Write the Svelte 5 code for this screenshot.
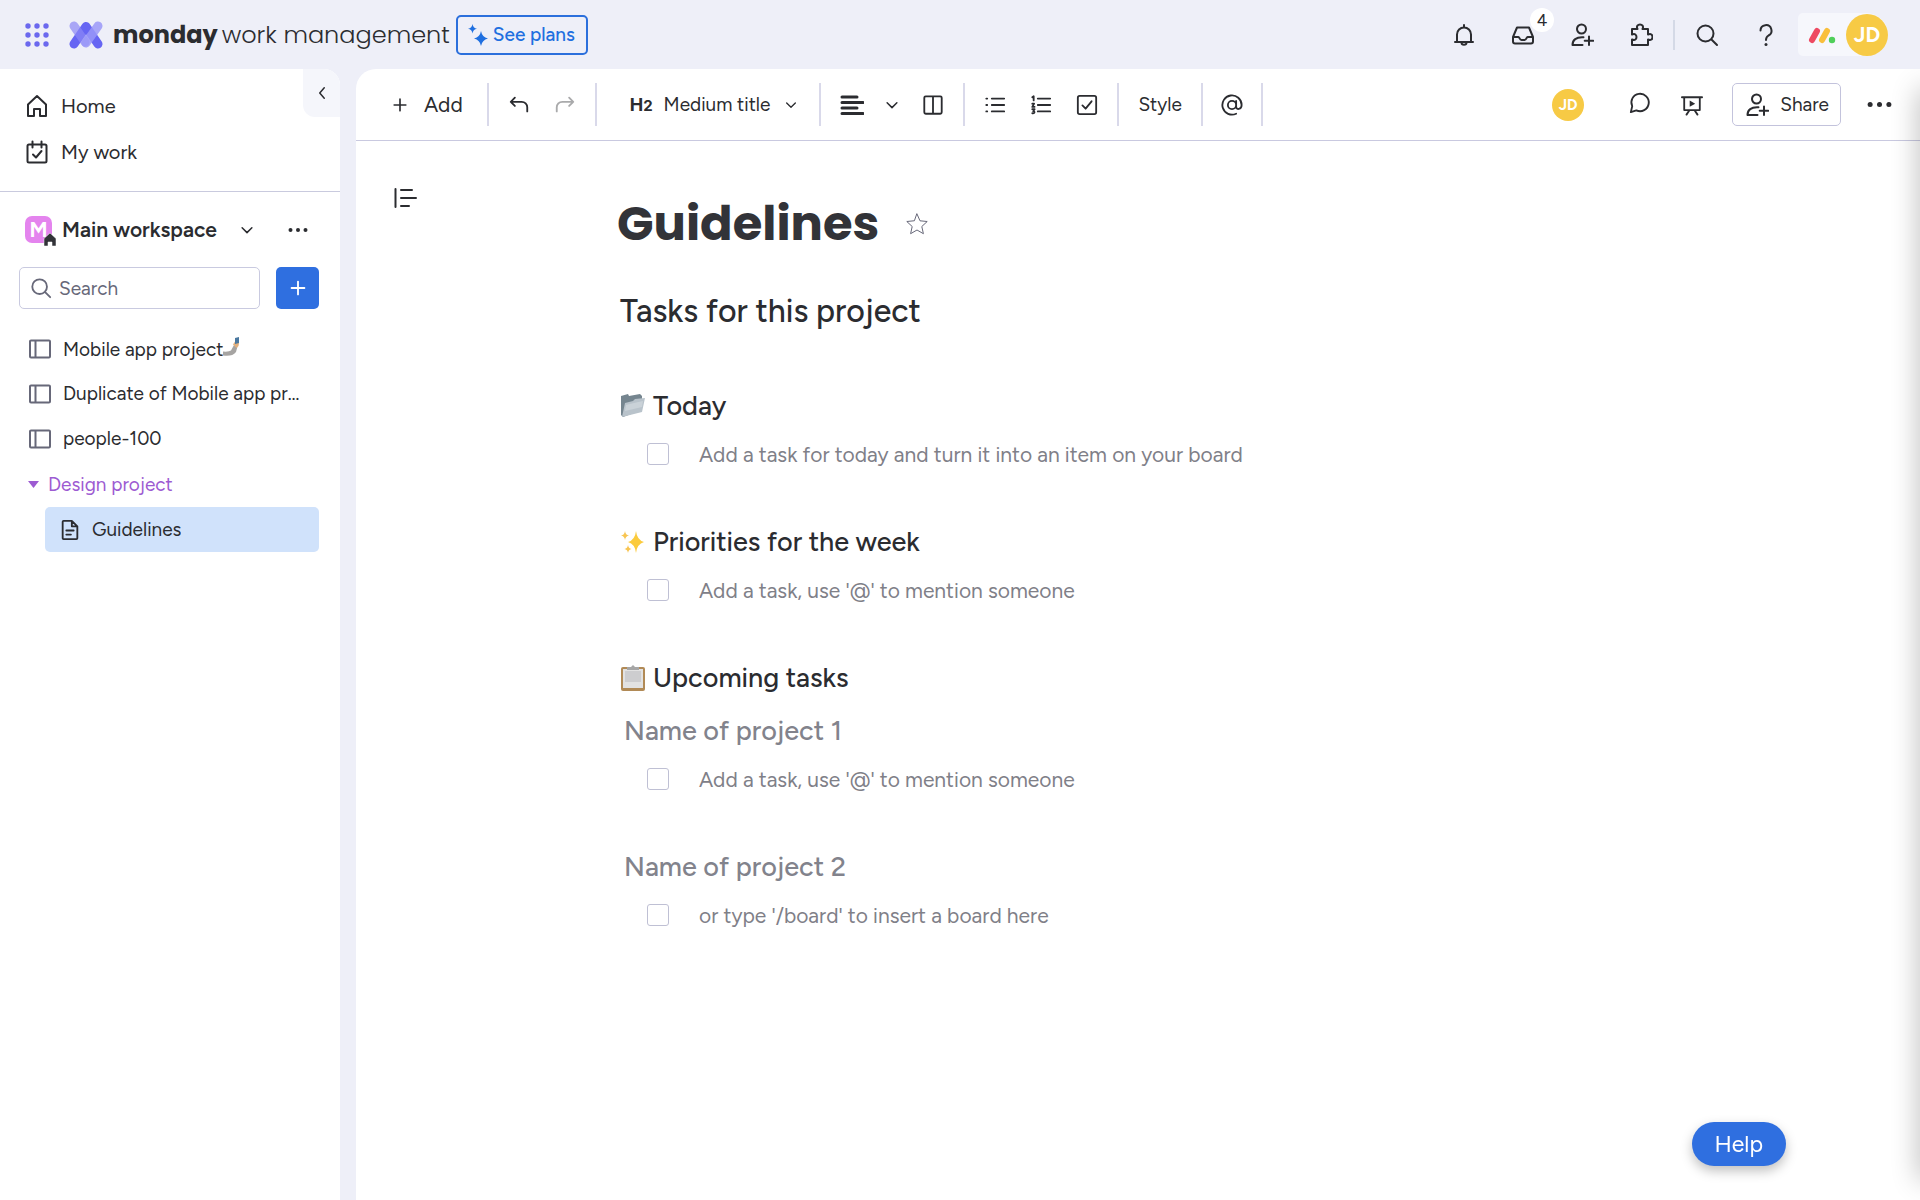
<script>
  // Icons are drawn on a 24x24 grid, mostly as strokes
  const icons = {
    home: 'M3 10.5 12 2l9 8.5V22h-6v-7H9v7H3z',
    work: 'M4 4.5h16a1.5 1.5 0 0 1 1.5 1.5v15a1.5 1.5 0 0 1-1.5 1.5H4A1.5 1.5 0 0 1 2.5 21V6A1.5 1.5 0 0 1 4 4.5zM7.5 1.5v6M16.5 1.5v6M8 14.5l3 3 5.5-6.5',
    board: 'M3 3.5h18a1 1 0 0 1 1 1v15a1 1 0 0 1-1 1H3a1 1 0 0 1-1-1v-15a1 1 0 0 1 1-1zM7.5 3.5v17',
    doc: 'M5 2h9l6 6v13a1 1 0 0 1-1 1H5a1 1 0 0 1-1-1V3a1 1 0 0 1 1-1zM14 2v6h6M8 12.5h8M8 17h5',
    search: 'M10.5 2.5a8 8 0 1 0 0 16 8 8 0 0 0 0-16zM16.2 16.2 22 22',
    down: 'M5.5 9l6.5 6.5L18.5 9',
    left: 'M15 5l-6 7 6 7',
    plus: 'M12 5v14M5 12h14',
    bell: 'M3 19h18M5 19V11.5a7 7 0 0 1 14 0V19M12 4.5V2M9.5 19.5c0 3 5 3 5 0',
    inbox: 'M6 4.5h12l4 9.5v4.5a2 2 0 0 1-2 2H4a2 2 0 0 1-2-2V14zM2 14h5.5c1 0 1 3 3 3h3c2 0 2-3 3-3H22',
    invite: 'M11.5 1.5a4.5 4.5 0 1 0 0 9 4.5 4.5 0 0 0 0-9zM12.5 22H2.5c0-5 3.5-8.2 11-7.7M19 13.5v8.5M14.7 17.7h8.6',
    puzzle: 'M3 6h5.500c-1.500-3 .5-4.500 2.500-4.500S15 3 13.500 6H19v5.500c3-1.500 4.500.5 4.500 2.500s-1.500 4-4.500 2.500V22H3v-5.500c3 1.500 4.500-.5 4.500-2.500S6 10 3 11.500z',
    help: 'M6.5 7.5a5.5 5.5 0 1 1 8 5c-2 1.2-2.5 2-2.5 4.5',
    undo: 'M7.5 4 3 8.5 7.5 13M3 8.5h12a6 6 0 0 1 6 6V19',
    redo: 'M16.5 4 21 8.5 16.5 13M21 8.5H9a6 6 0 0 0-6 6V19',
    align: 'M2 4h15M2 9.5h21M2 15h15M2 20.5h21',
    columns: 'M4 2.5h16A1.5 1.5 0 0 1 21.5 4v16a1.5 1.5 0 0 1-1.5 1.5H4A1.5 1.5 0 0 1 2.5 20V4A1.5 1.5 0 0 1 4 2.5zM12 2.5v19',
    bullets: 'M8.5 5H22M8.5 12H22M8.5 19H22M2.5 5h1M2.5 12h1M2.5 19h1',
    numbers: 'M8.5 5H22M8.5 12H22M8.5 19H22M2.5 3.5 4 2.5V7M2.5 10.5h2l-2 3.5h2.5M2.5 16.5H5l-1.5 2.2c2 0 2 2.8-1 2.3',
    check: 'M4 2h16a2 2 0 0 1 2 2v16a2 2 0 0 1-2 2H4a2 2 0 0 1-2-2V4a2 2 0 0 1 2-2zM7 12.5l3.5 3.5 6.5-8',
    mention: 'M12 7.5a4.5 4.5 0 1 0 0 9 4.5 4.5 0 0 0 0-9zM16.5 7.5V13.5c0 4.5 6 3.5 6-1.5a10.5 10.5 0 1 0-6 9.5',
    chat: 'M3.5 15.5a9.5 9.5 0 1 1 4.5 4.5l-6 2z',
    present: 'M1 3.5h22M3.5 3.5V17.5h17V3.5M9 18l-3 4.5M15 18l3 4.5',
    outline: 'M2.5 3v18M8 4h11M8 12h15M8 20h8',
    star: 'M12 2l3 6.8 7.2.7-5.4 5 1.6 7.2L12 18l-6.4 3.7 1.6-7.2-5.4-5L9 8.8z'
  };

  const boards = ['Mobile app project', 'Duplicate of Mobile app project', 'people-100'];

  const sections = [
    { emoji: 'folder', title: 'Today', hint: 'Add a task for today and turn it into an item on your board' },
    { emoji: 'sparkles', title: 'Priorities for the week', hint: "Add a task, use '@' to mention someone" },
    { emoji: 'clipboard', title: 'Upcoming tasks', project: 'Name of project 1', hint: "Add a task, use '@' to mention someone" },
    { project: 'Name of project 2', hint: "or type '/board' to insert a board here" }
  ];

  let query = '';
</script>

{#snippet icon(name, size = 24, width = 2)}
  <svg class="icon" width={size} height={size} viewBox="0 0 24 24" stroke-width={width}>
    <path d={icons[name]} />
    {#if name === 'help'}<circle class="solid" cx="12" cy="21.5" r="1.5" />{/if}
    {#if name === 'present'}<path class="solid" d="M9.5 7v7l6-3.5z" />{/if}
  </svg>
{/snippet}

{#snippet dots(size)}
  <svg class="dots" width={size} height={size} viewBox="0 0 24 24">
    <circle cx="3" cy="12" r="2.4" /><circle cx="12" cy="12" r="2.4" /><circle cx="21" cy="12" r="2.4" />
  </svg>
{/snippet}

<div class="app">
  <header class="topbar">
    <button class="plain" aria-label="Products">
      <svg width="24" height="24" viewBox="0 0 24 24" fill="#6b68ee">
        {#each [3, 12, 21] as y}
          {#each [3, 12, 21] as x}
            <circle cx={x} cy={y} r="2.7" />
          {/each}
        {/each}
      </svg>
    </button>
    <a class="brand" href="/">
      <svg width="34" height="28" viewBox="0 0 34 28" fill="none" stroke-width="9" stroke-linecap="round" stroke-linejoin="round">
        <path d="M5 23 17 5.5 29 23" stroke="#6665f3" />
        <path d="M5 5 16 21" stroke="#8b88f5" stroke-opacity="0.7" />
        <path d="M29 5 17 22" stroke="#9a98f8" stroke-opacity="0.85" />
      </svg>
      <span class="name"><b>monday</b><span>work management</span></span>
    </a>
    <button class="plans">
      <svg width="20" height="22" viewBox="0 0 20 22" fill="#1f6fe0">
        <path d="M13 7q1 6 7 7.5-6 1.5-7 7.5-1-6-7-7.5 6-1.5 7-7.5z" />
        <path d="M4.5 0q.5 4 4.5 4.7-4 .8-4.5 4.8Q4 5.500 0 4.700 4 4 4.500 0z" />
      </svg>
      See plans
    </button>
    <nav class="actions" aria-label="Account">
      <button class="plain" aria-label="Notifications">{@render icon('bell')}</button>
      <button class="plain inbox" aria-label="Inbox">{@render icon('inbox')}<span class="badge">4</span></button>
      <button class="plain" aria-label="Invite">{@render icon('invite')}</button>
      <button class="plain" aria-label="Apps">{@render icon('puzzle')}</button>
    </nav>
    <span class="rule"></span>
    <button class="plain find" aria-label="Search">{@render icon('search')}</button>
    <button class="plain" aria-label="Help center">{@render icon('help')}</button>
    <button class="profile" aria-label="Profile">
      <svg width="28" height="18" viewBox="0 0 28 18" fill="none" stroke-width="6" stroke-linecap="round">
        <path d="M4 14 9 5" stroke="#ee4a62" />
        <path d="M14 14l5-9" stroke="#f9bf3c" />
        <circle cx="24" cy="14" r="3.2" fill="#4fcf5a" />
      </svg>
      <span class="avatar large">JD</span>
    </button>
  </header>

  <div class="body">
    <aside class="sidebar">
      <button class="collapse" aria-label="Collapse sidebar">{@render icon('left', 18, 2)}</button>
      <nav class="main-nav">
        <a href="/home">{@render icon('home')}Home</a>
        <a href="/my-work">{@render icon('work')}My work</a>
      </nav>
      <div class="workspace">
        <span class="logo">M
          <svg width="14" height="15" viewBox="0 0 14 15">
            <path d="M7 1 1 6.5V14h4v-4h4v4h4V6.5z" fill="#323338" stroke="#fff" stroke-width="0.5" />
          </svg>
        </span>
        <b>Main workspace</b>
        <button class="plain" aria-label="Switch workspace">{@render icon('down', 18, 2)}</button>
        <button class="plain more" aria-label="Workspace options">{@render dots(20)}</button>
      </div>
      <div class="search-row">
        <label class="search">
          {@render icon('search', 22, 2)}
          <input type="text" placeholder="Search" aria-label="Search" bind:value={query} />
        </label>
        <button class="create" aria-label="Add item">{@render icon('plus', 22, 2)}</button>
      </div>
      <nav class="tree">
        {#each boards as board, i}
          <a href="/boards/{i}">
            {@render icon('board')}
            <span>{board}{#if i === 0}<svg class="selfie" width="18" height="20" viewBox="0 0 18 20">
              <path d="M0 14.5q6 .5 8-1l3-5.5 3.5 1.5-1.5 5.5q-4 5-13 3.5z" fill="#a6a4a2" />
              <path d="M10 7.5l2-3 4 1.5-.5 3-2 2z" fill="#e2b07e" />
              <path d="M12 1l4-1v6l-4 1z" fill="#4a78a0" />
            </svg>{/if}</span>
          </a>
        {/each}
        <button class="folder">
          <svg width="11" height="7" viewBox="0 0 11 7"><path d="M0 0h11L5.5 7z" fill="#9d5bd2" /></svg>
          Design project
        </button>
        <a class="active" href="/docs/guidelines">{@render icon('doc', 22, 2)}<span>Guidelines</span></a>
      </nav>
    </aside>

    <main class="doc">
      <div class="toolbar">
        <div class="group add">
          <button>{@render icon('plus', 20, 2)}Add</button>
        </div>
        <div class="group history">
          <button aria-label="Undo">{@render icon('undo', 22)}</button>
          <button aria-label="Redo" disabled>{@render icon('redo', 22)}</button>
        </div>
        <div class="group style">
          <button><b>H<small>2</small></b>Medium title{@render icon('down', 16, 2)}</button>
        </div>
        <div class="group layout">
          <button aria-label="Align">{@render icon('align', 24, 3)}{@render icon('down', 18, 2)}</button>
          <button aria-label="Columns">{@render icon('columns', 22)}</button>
        </div>
        <div class="group lists">
          <button aria-label="Bulleted list">{@render icon('bullets', 22)}</button>
          <button aria-label="Numbered list">{@render icon('numbers', 22)}</button>
          <button aria-label="Checklist">{@render icon('check', 22)}</button>
        </div>
        <div class="group"><button>Style</button></div>
        <div class="group mention"><button aria-label="Mention">{@render icon('mention', 22)}</button></div>
        <div class="tools">
          <span class="avatar">JD</span>
          <button class="comments" aria-label="Comments">{@render icon('chat', 22)}</button>
          <button aria-label="Present">{@render icon('present', 22)}</button>
          <button class="share">{@render icon('invite')}Share</button>
          <button class="more" aria-label="More">{@render dots(25)}</button>
        </div>
      </div>

      <div class="canvas">
        <button class="outline" aria-label="Table of contents">{@render icon('outline', 24, 2)}</button>
        <article>
          <div class="title">
            <h1>Guidelines</h1>
            <button aria-label="Add to favorites">{@render icon('star', 24, 1)}</button>
          </div>
          <h2>Tasks for this project</h2>
          {#each sections as section, i}
            <section>
              {#if section.title}
                <h3>
                  <svg width="26" height="26" viewBox="0 0 26 26">
                    {#if section.emoji === 'folder'}
                      <path d="M1 3l7-2 1 2 11-2 2 2v14L3 24 1 22z" fill="#75858f" />
                      <path d="M5 10l8-2 2-2 10-1-3 14L2 24z" fill="#b9c3cb" />
                      <path d="M6 12l8-2 9-2-1 6L5 18z" fill="#cad2d8" />
                    {:else if section.emoji === 'sparkles'}
                      <path d="M16 2q1 9 8 11-7 2-8 11-1-9-8-11 7-2 8-11z" fill="#fbcb3d" />
                      <path d="M5 2q.5 4 4 4.5-3.5.5-4 4.5-.5-4-4-4.5Q4.5 6 5 2zM8 16q.5 3.5 3.5 4-3 .5-3.5 4-.5-3.5-3.5-4 3-.5 3.5-4z" fill="#f8c552" />
                    {:else}
                      <rect x="1" y="2" width="24" height="24" rx="2" fill="#b18a56" />
                      <path d="M3 4h20v19H3z" fill="#e2e2e2" />
                      <path d="M5 6h16v11H5z" fill="#cdcdcf" />
                      <path d="M7 2h4l2-2 2 2h4v3H7z" fill="#a6a6a6" />
                    {/if}
                  </svg>
                  {section.title}
                </h3>
              {/if}
              {#if section.project}
                <h4>{section.project}</h4>
              {/if}
              <div class="task">
                <input type="checkbox" id="task-{i}" />
                <label for="task-{i}">{section.hint}</label>
              </div>
            </section>
          {/each}
        </article>
      </div>
      <div class="edge"></div>
    </main>
  </div>
  <button class="help">Help</button>
</div>

<style>
  :global(body) {
    margin: 0;
    background: #eeeff8;
  }

  .app {
    min-height: 100vh;
    display: flex;
    flex-direction: column;
    background: #eeeff8;
    color: #2b2c30;
    font-family: Figtree, Lato, "Open Sans", sans-serif;
    font-size: 19px;
  }

  button,
  input {
    font: inherit;
    color: inherit;
  }

  button {
    display: flex;
    align-items: center;
    padding: 0;
    border: 0;
    background: none;
    cursor: pointer;
  }

  a {
    color: inherit;
    text-decoration: none;
  }

  .icon {
    flex: none;
    fill: none;
    stroke: currentColor;
    stroke-linecap: round;
    stroke-linejoin: round;
  }

  .solid {
    fill: currentColor;
    stroke: none;
  }

  .dots {
    flex: none;
    fill: currentColor;
  }

  .avatar {
    display: flex;
    align-items: center;
    justify-content: center;
    width: 32px;
    height: 32px;
    border-radius: 50%;
    background: #f7ca45;
    color: #fff;
    font-size: 15px;
    font-weight: 700;
  }

  .avatar.large {
    width: 42px;
    height: 42px;
    font-size: 21px;
  }

  /* Top bar */
  .topbar {
    display: flex;
    align-items: center;
    height: 69px;
    padding: 0 32px 0 25px;
    box-sizing: border-box;
  }

  .brand {
    display: flex;
    align-items: center;
    gap: 10px;
    margin-left: 20px;
  }

  .name {
    display: flex;
    gap: 4px;
    font-family: Poppins, Inter, sans-serif;
    font-size: 24px;
    font-weight: 300;
    white-space: nowrap;
  }

  .name b {
    font-weight: 700;
  }

  .plans {
    gap: 5px;
    height: 40px;
    margin-left: 6px;
    padding: 0 11px 0 10px;
    border: 2px solid #2b6fdc;
    border-radius: 5px;
    color: #1f6fe0;
    font-weight: 500;
  }

  .actions {
    display: flex;
    gap: 35px;
    margin-left: auto;
  }

  .inbox {
    position: relative;
  }

  .badge {
    position: absolute;
    left: 19px;
    top: -15px;
    width: 24px;
    height: 24px;
    border-radius: 50%;
    background: #fff;
    font-size: 17px;
    line-height: 24px;
    text-align: center;
  }

  .rule {
    width: 2px;
    height: 30px;
    margin: 0 20px;
    background: #d4d9e6;
  }

  .find {
    margin-right: 35px;
  }

  .profile {
    gap: 10px;
    height: 43px;
    margin-left: 20px;
    padding-left: 10px;
    border-radius: 5px 22px 22px 5px;
    background: #f6f7fc;
  }

  .body {
    flex: 1;
    display: flex;
    gap: 16px;
  }

  /* Sidebar */
  .sidebar {
    position: relative;
    flex: none;
    width: 340px;
    border-radius: 0 16px 0 0;
    background: #fff;
    overflow: hidden;
  }

  .collapse {
    position: absolute;
    top: 0;
    right: 0;
    justify-content: center;
    width: 37px;
    height: 48px;
    border-radius: 0 0 0 12px;
    background: #f5f6fb;
  }

  .main-nav {
    padding: 14px 25px 16px;
    border-bottom: 1px solid #c9cade;
  }

  .main-nav a {
    display: flex;
    align-items: center;
    gap: 12px;
    height: 46px;
    font-size: 20px;
  }

  .workspace {
    display: flex;
    align-items: center;
    height: 75px;
    padding: 0 32px 0 25px;
    font-size: 21px;
  }

  .workspace b {
    margin: 0 21px 0 10px;
    font-weight: 600;
    white-space: nowrap;
  }

  .workspace .more {
    margin-left: auto;
  }

  .logo {
    position: relative;
    width: 27px;
    height: 27px;
    border-radius: 7px;
    background: #e484ee;
    color: #fff;
    font-weight: 700;
    line-height: 27px;
    text-align: center;
  }

  .logo svg {
    position: absolute;
    right: -5px;
    bottom: -4px;
  }

  .search-row {
    display: flex;
    gap: 16px;
    padding: 0 21px 0 19px;
  }

  .search {
    flex: 1;
    display: flex;
    align-items: center;
    gap: 7px;
    height: 42px;
    min-width: 0;
    padding: 0 10px;
    border: 1px solid #c9cae0;
    border-radius: 5px;
    box-sizing: border-box;
    color: #676879;
  }

  .search input {
    min-width: 0;
    flex: 1;
    padding: 0;
    border: 0;
    background: none;
    outline: none;
  }

  .search input::placeholder {
    color: #676879;
    opacity: 1;
  }

  .create {
    justify-content: center;
    width: 43px;
    height: 42px;
    border-radius: 5px;
    background: #2f6fe0;
    color: #fff;
  }

  .tree {
    display: flex;
    flex-direction: column;
    margin-top: 17px;
    padding: 0 21px 0 28px;
  }

  .tree a,
  .folder {
    display: flex;
    align-items: center;
    gap: 11px;
    height: 45px;
  }

  .tree a {
    padding-right: 18px;
  }

  .tree span {
    overflow: hidden;
    text-overflow: ellipsis;
    white-space: nowrap;
  }

  .tree a > :global(.icon) {
    color: #676879;
  }

  .selfie {
    vertical-align: -1px;
  }

  .folder {
    gap: 9px;
    height: 46px;
    color: #9d5bd2;
  }

  .tree .active {
    gap: 11px;
    margin-left: 17px;
    padding-left: 14px;
    border-radius: 5px;
    background: #d0e2fb;
  }

  .tree .active > :global(.icon) {
    color: #2b2c30;
  }

  /* Document */
  .doc {
    position: relative;
    flex: 1;
    min-width: 0;
    border-radius: 20px 0 0 0;
    background: #fff;
    overflow: hidden;
  }

  .toolbar {
    display: flex;
    align-items: center;
    height: 71px;
    padding: 0 28px 0 34px;
    border-bottom: 1px solid #c9c9e0;
    white-space: nowrap;
  }

  .group {
    display: flex;
    align-items: center;
    height: 43px;
    padding: 0 19px;
    border-right: 2px solid #d9d9ea;
  }

  .add {
    padding: 0 24px 0 0;
    font-size: 21px;
  }

  .add button {
    gap: 14px;
  }

  .history {
    gap: 24px;
  }

  .history button:disabled {
    opacity: 0.4;
  }

  .style {
    padding: 0 20px 0 33px;
  }

  .style b {
    margin-right: 9px;
    font-family: Inter, sans-serif;
    font-size: 18px;
  }

  .style small {
    font-size: 15px;
  }

  .style button {
    gap: 2px;
  }

  .style :global(.icon) {
    margin-left: 11px;
  }

  .layout {
    gap: 21px;
  }

  .layout button {
    gap: 19px;
  }

  .lists {
    gap: 24px;
  }

  .mention {
    padding: 0 18px;
  }

  .tools {
    display: flex;
    align-items: center;
    margin-left: auto;
  }

  .comments {
    margin: 0 30px 4px 45px;
  }

  .share {
    gap: 11px;
    height: 43px;
    margin: 0 26px 0 29px;
    padding: 0 11px 0 12px;
    border: 1px solid #c3c3dc;
    border-radius: 5px;
  }

  .canvas {
    display: flex;
    align-items: flex-start;
    padding: 45px 37px;
  }

  .outline {
    flex: none;
    width: 224px;
  }

  .title {
    display: flex;
    align-items: center;
    gap: 26px;
    height: 76px;
  }

  article {
    flex: 1;
  }

  h1,
  h2,
  h3,
  h4 {
    margin: 0;
    font-weight: 500;
  }

  h1 {
    font-family: Poppins, Inter, sans-serif;
    font-size: 48px;
    font-weight: 700;
    line-height: 76px;
    color: #323338;
  }

  .title button {
    color: #676879;
  }

  h2 {
    margin: 25px 0 47px 3px;
    font-size: 32px;
    line-height: 48px;
  }

  h3,
  h4 {
    font-size: 27px;
    line-height: 48px;
  }

  h3 {
    display: flex;
    align-items: center;
    gap: 7px;
    margin-left: 3px;
  }

  h4 {
    padding: 5px 0 0 7px;
    color: #82838c;
  }

  section:last-child h4 {
    padding-top: 0;
  }

  section {
    margin-bottom: 40px;
  }

  .task {
    display: flex;
    align-items: center;
    gap: 30px;
    height: 48px;
    padding-left: 30px;
    color: #7f8088;
    font-size: 21px;
  }

  .task input {
    appearance: none;
    width: 22px;
    height: 22px;
    margin: 0;
    border: 1px solid #bfc0d4;
    border-radius: 3px;
    box-sizing: border-box;
  }

  .task input:checked {
    background: #2f6fe0;
  }

  .edge {
    position: absolute;
    top: 20px;
    right: -20px;
    bottom: 20px;
    width: 20px;
    box-shadow: 0 0 28px rgba(0, 0, 0, 0.3);
    pointer-events: none;
  }

  .help {
    position: fixed;
    right: 134px;
    bottom: 34px;
    padding: 0 23px;
    height: 44px;
    border-radius: 22px;
    background: #2f6fe0;
    box-shadow: 0 5px 12px rgba(0, 0, 0, 0.25);
    color: #fff;
    font-size: 23px;
  }
</style>
